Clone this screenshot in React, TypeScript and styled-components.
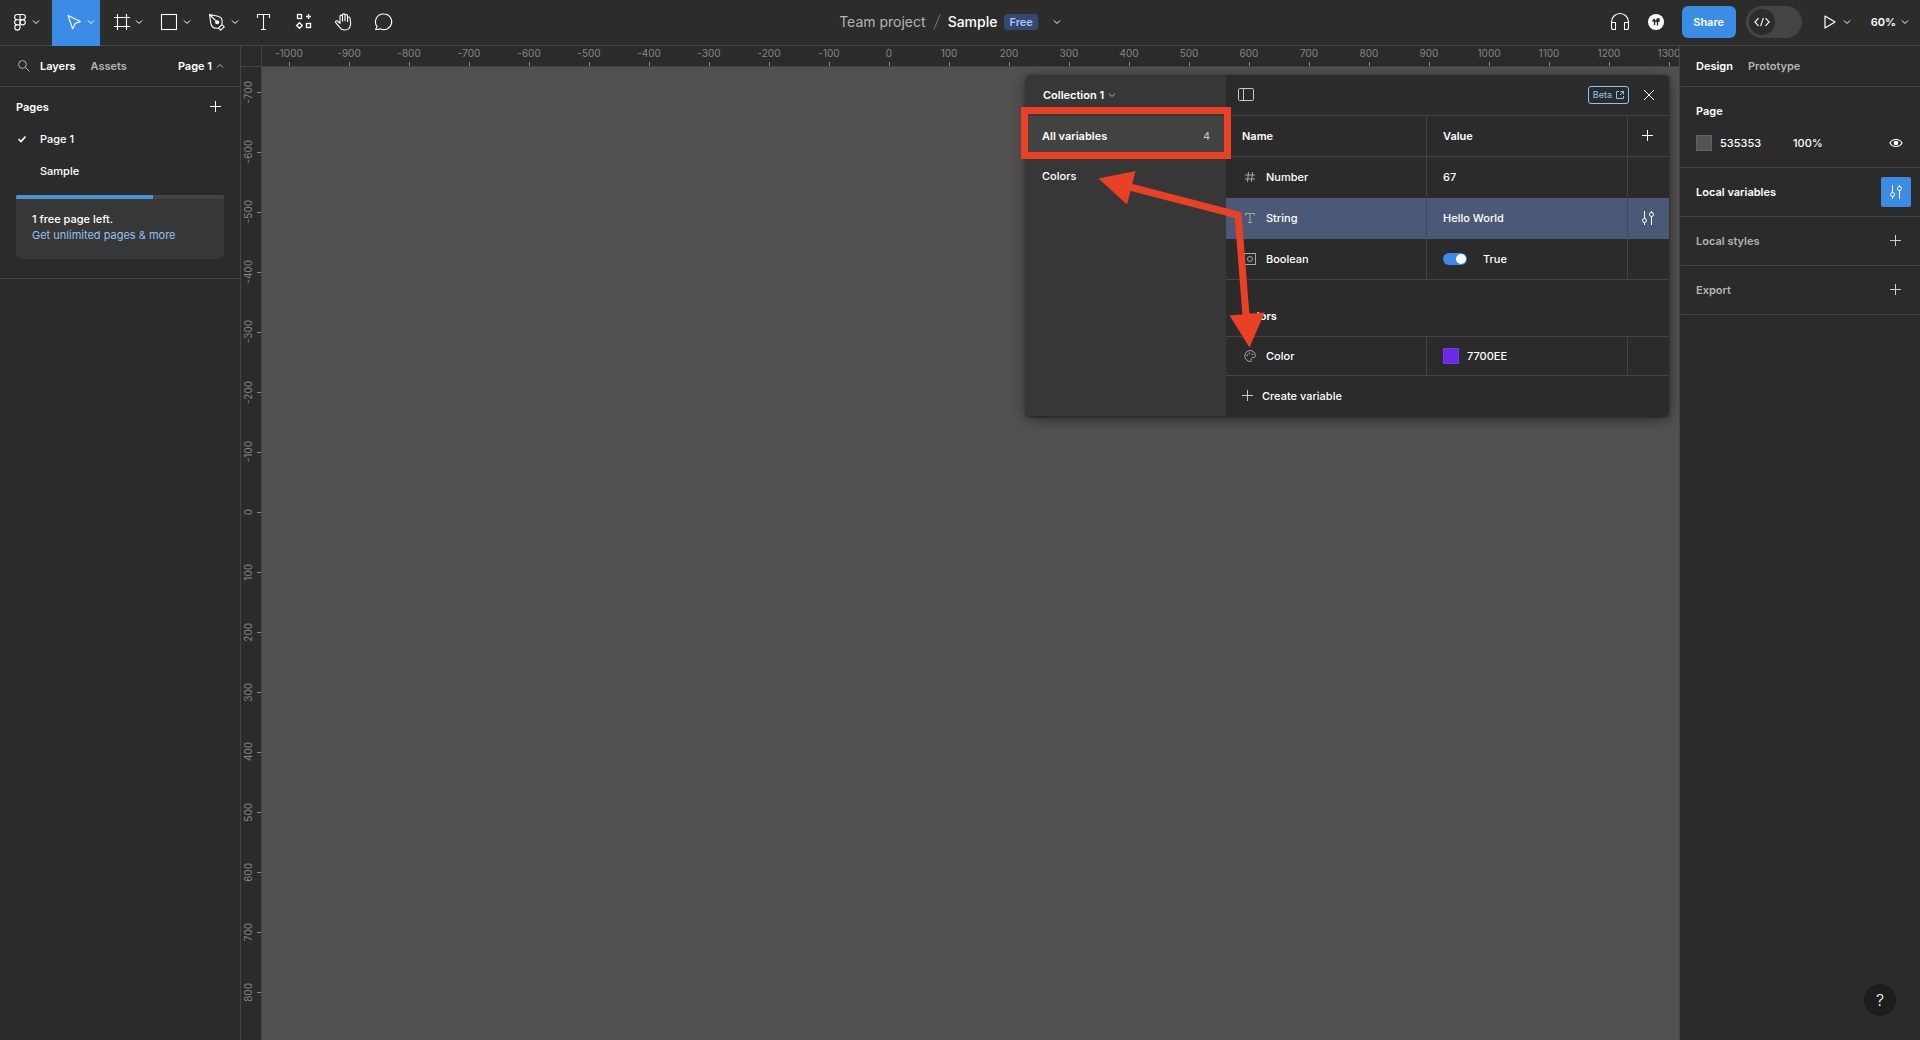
import React, { useEffect, useState } from "react";
import styled, { createGlobalStyle, css } from "styled-components";

const c = {
  bar: "#2c2c2b",
  panel: "#2c2b2c",
  side: "#383738",
  line: "#444444",
  canvas: "#525051",
  blue: "#3a8ce4",
  link: "#8fc3f0",
  text: "#ffffff",
  muted: "#b3b3b3",
  ruler: "#858585",
  selected: "#4b5977",
  red: "#ea4025",
};

const GlobalStyle = createGlobalStyle`
  *, *::before, *::after { box-sizing: border-box; }
  body { margin: 0; background: ${c.canvas}; }
  body, button, input, table {
    font-family: Inter, "Liberation Sans", sans-serif;
    font-size: 11px;
    line-height: 16px;
    color: ${c.text};
  }
  button { margin: 0; padding: 0; border: 0; background: none; }
  svg { display: block; flex: none; }
`;

/* ---------- icons ---------- */

type IconProps = { size?: number; width?: number; children: React.ReactNode };

const Icon = ({ size = 16, width = 1, children }: IconProps) => (
  <svg
    width={size}
    height={size}
    viewBox={`0 0 ${size} ${size}`}
    fill="none"
    stroke="currentColor"
    strokeWidth={width}
    aria-hidden="true"
  >
    {children}
  </svg>
);

const Chevron = ({ up = false }: { up?: boolean }) => (
  <Icon size={8}>
    <path d={up ? "M1 5.5 4 2.5 7 5.5" : "M1 2.5 4 5.5 7 2.5"} />
  </Icon>
);

const Slash = () => (
  <svg width="8" height="16" viewBox="0 0 8 16" stroke="#777777" aria-hidden="true">
    <path d="M1 15.5 7 .5" />
  </svg>
);

const FigmaIcon = () => (
  <Icon size={24} width={1.1}>
    <path d="M12 4.5H9.200a2.600 2.600 0 0 0 0 5.200H12zM12 4.500h2.800a2.600 2.600 0 0 1 0 5.200H12M12 9.700H9.200a2.600 2.600 0 0 0 0 5.200H12zM9.200 14.900a2.600 2.600 0 1 0 2.800 2.600v-2.600z" />
    <circle cx="14.700" cy="12.300" r="2.600" />
  </Icon>
);
const MoveIcon = () => (
  <Icon size={24} width={1.1}>
    <path d="M6 5.500 10.600 18.700 13.200 13.600 18.400 11.400z" strokeLinejoin="round" />
  </Icon>
);
const FrameIcon = () => (
  <Icon size={24} width={1.1}>
    <path d="M7.500 4v16M16.500 4v16M4 7.500h16M4 16.500h16" />
  </Icon>
);
const RectIcon = () => (
  <Icon size={24} width={1.1}>
    <rect x="3.500" y="4.500" width="15" height="15" />
  </Icon>
);
const PenIcon = () => (
  <Icon size={24} width={1.1}>
    <path
      d="M3.500 4.500 12 6.200c3 .700 4.600 3.300 4.100 6.600l-.300 2L12.500 18l-2 .200c-3 .200-5-1.600-5.600-4.500zM3.500 4.500l6.700 6.700M15.900 14.600l2.400 2.200-3.600 3.400-2.200-2.300"
      strokeLinejoin="round"
    />
    <circle cx="11.200" cy="12.200" r="1.500" fill="currentColor" />
  </Icon>
);
const TextIcon = () => (
  <Icon size={24} width={1.1}>
    <path d="M5.500 8V4.500h12V8M11.500 4.500v15M9 19.500h5" />
  </Icon>
);
const ResourcesIcon = () => (
  <Icon size={24} width={1.3}>
    <rect x="5.500" y="4.500" width="4" height="4" />
    <path d="M16.500 4v5M14 6.500h5M7.500 12.700 10.300 15.500 7.500 18.300 4.700 15.500z" />
    <rect x="14.500" y="13.500" width="4" height="4" />
  </Icon>
);
const HandIcon = () => (
  <Icon size={24} width={1.1}>
    <path
      d="M8 13.300V6.400a1.250 1.250 0 0 1 2.500 0V11M10.500 10.500V5.100a1.250 1.250 0 0 1 2.500 0v5.700M13 10.500V5.700a1.250 1.250 0 0 1 2.500 0V11.500M15.500 10.500V8.300a1.250 1.250 0 0 1 2.500 0c0 1.500.800 3.500.600 5.700-.300 3.600-2.200 6-5.800 6-3 0-4.300-1.300-5.700-3.300l-3.400-4c-.800-1.200.700-2.500 1.900-1.700l2.400 2.300"
      strokeLinecap="round"
      strokeLinejoin="round"
    />
  </Icon>
);
const CommentIcon = () => (
  <Icon size={24} width={1.1}>
    <path
      d="M12 4a7.800 7.800 0 1 1-3.700 14.700c-1.200.700-2.900 1-4.800.700.800-.900 1.500-1.700 1.500-3A7.800 7.800 0 0 1 12 4z"
      strokeLinejoin="round"
    />
  </Icon>
);
const HeadphonesIcon = () => (
  <Icon size={24} width={1.1}>
    <path
      d="M3.500 15v-3a8.500 8.500 0 0 1 17 0v3M3.500 12.500h4v7h-2a2 2 0 0 1-2-2zM20.500 12.500h-4v7h2a2 2 0 0 0 2-2z"
      strokeLinejoin="round"
    />
  </Icon>
);
const BadgeIcon = () => (
  <Icon size={10} width={1.4}>
    <path d="M3.500 2v6M1.500 4.500 3.500 2M6.500 2v6.500M4.500 5 6.500 2H8v3" />
  </Icon>
);
const CodeIcon = () => (
  <Icon size={16} width={1.1}>
    <path d="M4.500 4.200.900 8l3.600 3.800M11.500 4.200 15.100 8l-3.600 3.800M9.400 3.800 6.600 12.200" />
  </Icon>
);
const PlayIcon = () => (
  <Icon size={16} width={1.2}>
    <path d="M3 2 13 8 3 14z" strokeLinejoin="round" />
  </Icon>
);
const SearchIcon = () => (
  <Icon size={16}>
    <circle cx="6.500" cy="6.500" r="3.900" />
    <path d="M9.400 9.400 13.500 13.500" />
  </Icon>
);
const PlusIcon = () => (
  <Icon size={16}>
    <path d="M7.500 2v11M2 7.500h11" />
  </Icon>
);
const CheckIcon = () => (
  <Icon size={12} width={1.6}>
    <path d="M2.500 6 5 8.500 9.500 3.500" />
  </Icon>
);
const SlidersIcon = () => (
  <Icon size={16}>
    <path d="M4.500 1v7.500M4.500 12.500V15M11.500 15V6.500M11.500 2.500V1" />
    <circle cx="4.500" cy="10.500" r="2" />
    <circle cx="11.500" cy="4.500" r="2" />
  </Icon>
);
const EyeIcon = () => (
  <Icon size={16} width={1.2}>
    <path d="M2 8c1.200-2.300 3.300-3.500 6-3.500s4.800 1.200 6 3.500c-1.200 2.300-3.300 3.500-6 3.500S3.200 10.300 2 8z" />
    <circle cx="8" cy="8" r="1.700" fill="currentColor" />
  </Icon>
);
const SidebarIcon = () => (
  <Icon size={16}>
    <rect x="0.500" y="1.500" width="15" height="12" rx="1" />
    <path d="M5.500 1.500v12" />
  </Icon>
);
const CloseIcon = () => (
  <Icon size={12}>
    <path d="M1 1 11 11M11 1 1 11" />
  </Icon>
);
const ExternalIcon = () => (
  <Icon size={8}>
    <path d="M3 .500H.500v7h7V5M4.500.500h3v3M7.500.500 4 4" />
  </Icon>
);
const NumberIcon = () => (
  <Icon size={12}>
    <path d="M4.500 1 3.500 11M8.500 1 7.500 11M1 4h10M1 8h10" />
  </Icon>
);
const StringIcon = () => (
  <Icon size={12}>
    <path d="M1.500 3.500v-2h9v2M6 1.500v9.500M4 10.500h4" />
  </Icon>
);
const BooleanIcon = () => (
  <Icon size={12}>
    <rect x="0.500" y="0.500" width="11" height="11" />
    <circle cx="6" cy="6" r="2.500" />
  </Icon>
);
const PaletteIcon = () => (
  <Icon size={12}>
    <path d="M6 .500a5.500 5.500 0 1 0 .700 11c1-.200.600-1.500.500-2.200-.100-1.200.600-1.700 1.800-1.700 1.500 0 2.500-.400 2.500-2A5.500 5.500 0 0 0 6 .500z" />
    <circle cx="3.400" cy="5.300" r=".5" />
    <circle cx="5.700" cy="3.300" r=".5" />
    <circle cx="8.500" cy="4.300" r=".5" />
  </Icon>
);

/* ---------- frame ---------- */

const Screen = styled.div`
  display: grid;
  grid-template-rows: auto 1fr;
  height: 100vh;
  overflow: hidden;
`;

const Toolbar = styled.header`
  display: grid;
  grid-template-columns: 1fr auto 1fr;
  height: 46px;
  background: ${c.bar};
  box-shadow: inset 0 -1px ${c.line};
`;

const Tools = styled.div`
  display: flex;
`;

const Tool = styled.button<{ $active?: boolean; $wide?: boolean; $single?: boolean }>`
  display: flex;
  align-items: center;
  gap: ${(p) => (p.$wide ? 0 : 1)}px;
  width: ${(p) => (p.$wide ? 52 : p.$single ? 40 : 48)}px;
  padding: 0 0 2px ${(p) => (p.$wide || p.$single ? 8 : 10)}px;
  background: ${(p) => (p.$active ? c.blue : "transparent")};
`;

const Title = styled.div`
  display: flex;
  align-items: center;
  gap: 7px;
  padding: 0 12px 2px 0;
  font-size: 14px;
  color: ${c.muted};

  strong {
    font-weight: 500;
    color: ${c.text};
  }
  button {
    padding: 8px;
  }
`;

const Plan = styled.span`
  padding: 0 5px;
  border-radius: 3px;
  background: #36486f;
  color: #a3c8fa;
  font-size: 11px;
  font-weight: 600;
`;

const Actions = styled.div`
  display: flex;
  align-items: center;
  justify-content: flex-end;
  padding: 0 11px 2px 0;
`;

const Avatar = styled.span`
  display: grid;
  place-items: center;
  width: 16px;
  height: 16px;
  margin: 0 18px 0 16px;
  border-radius: 50%;
  background: #fff;
  color: #2c2c2c;
`;

const Share = styled.button`
  width: 54px;
  height: 32px;
  margin-right: 10px;
  border-radius: 6px;
  background: ${c.blue};
  font-weight: 600;
`;

const DevMode = styled.button`
  width: 56px;
  height: 32px;
  padding: 3px;
  border-radius: 16px;
  background: #444444;

  span {
    display: grid;
    place-items: center;
    width: 26px;
    height: 26px;
    border-radius: 50%;
    background: ${c.bar};
  }
`;

const MenuButton = styled.button`
  display: flex;
  align-items: center;
  gap: 5px;
  margin-left: 20px;
  font-weight: 600;
`;

const Work = styled.div`
  display: grid;
  grid-template-columns: 241px minmax(0, 1fr) 241px;
  min-height: 0;
`;

/* ---------- side panels ---------- */

const Panel = styled.aside<{ $side: "left" | "right" }>`
  background: ${c.panel};
  ${(p) => (p.$side === "left" ? "border-right" : "border-left")}: 1px solid ${c.line};
`;

const Tabs = styled.div`
  display: flex;
  align-items: center;
  gap: 15px;
  height: 41px;
  padding: 0 16px;
  border-bottom: 1px solid ${c.line};
`;

const Tab = styled.button<{ $on?: boolean }>`
  font-weight: 600;
  color: ${(p) => (p.$on ? c.text : c.muted)};
`;

const SearchButton = styled.button`
  margin-right: -7px;
  color: ${c.muted};
`;

const PagePicker = styled(Tab)`
  display: flex;
  align-items: center;
  gap: 4px;
  margin-left: auto;

  svg {
    color: ${c.muted};
  }
`;

const Section = styled.section`
  padding-bottom: 19px;
  border-bottom: 1px solid ${c.line};
`;

const SectionHead = styled.div`
  display: flex;
  align-items: center;
  justify-content: space-between;
  height: 36px;
  padding: 4px 16px 0;

  h2 {
    margin: 0;
    font-size: 11px;
    font-weight: 600;
  }
`;

const PageRow = styled.button`
  display: grid;
  grid-template-columns: 24px 1fr;
  align-items: center;
  width: 100%;
  height: 32px;
  padding: 0 16px;
  text-align: left;
  font-weight: 500;

  span {
    grid-column: 2;
  }
`;

const Upsell = styled.div`
  margin: 8px 16px 0;
  border-radius: 2px 2px 5px 5px;
  background: ${c.side};
  overflow: hidden;
  font-weight: 500;

  p {
    margin: 0;
    padding: 12px 16px 16px;
  }
  a {
    display: block;
    color: ${c.link};
    font-weight: 400;
    text-decoration: none;
  }
`;

const Meter = styled.div`
  height: 4px;
  background: ${c.line};

  div {
    width: 66%;
    height: 100%;
    background: #4a92d6;
  }
`;

const PageProps = styled.section`
  padding: 8px 16px;
  border-bottom: 1px solid ${c.line};

  h2 {
    margin: 0;
    font-size: 11px;
    font-weight: 600;
    line-height: 32px;
  }
`;

const Fill = styled.div`
  display: grid;
  grid-template-columns: 24px 73px 1fr auto;
  align-items: center;
  height: 32px;
  font-weight: 500;
`;

const Swatch = styled.span<{ $color: string }>`
  width: 16px;
  height: 16px;
  background: ${(p) => p.$color};
  box-shadow: inset 0 0 0 1px rgba(255, 255, 255, 0.08);
`;

const PropRow = styled.section<{ $on?: boolean }>`
  display: flex;
  align-items: center;
  justify-content: space-between;
  height: 49px;
  padding: 0 9px 0 16px;
  border-bottom: 1px solid ${c.line};
  color: ${(p) => (p.$on ? c.text : c.muted)};

  h2 {
    margin: 0;
    font-size: 11px;
    font-weight: 600;
  }
  button {
    display: grid;
    place-items: center;
    width: 30px;
    height: 30px;
    border-radius: 2px;
    background: ${(p) => (p.$on ? c.blue : "transparent")};
    color: ${(p) => (p.$on ? c.text : "#d0d0d0")};
  }
`;

const Help = styled.button`
  position: fixed;
  right: 24px;
  bottom: 24px;
  width: 32px;
  height: 32px;
  border-radius: 50%;
  background: #1e1d1e;
  font-size: 16px;
  font-weight: 300;
`;

/* ---------- canvas and rulers ---------- */

const Stage = styled.main`
  position: relative;
  display: grid;
  grid-template: 21px minmax(0, 1fr) / 21px minmax(0, 1fr);
`;

const rulerBase = css`
  display: flex;
  overflow: hidden;
  background: ${c.panel};
  color: ${c.ruler};
  font-size: 10px;
  line-height: 12px;
`;

const Corner = styled.div`
  background: ${c.panel};
  border-right: 1px solid ${c.line};
  border-bottom: 1px solid ${c.line};
`;

const TopRuler = styled.div`
  ${rulerBase}
  padding-top: 1px;
  border-bottom: 1px solid ${c.line};

  div:first-child {
    margin-left: -3px;
  }
`;

const TopMark = styled.div`
  display: flex;
  flex: none;
  flex-direction: column;
  align-items: center;
  justify-content: space-between;
  width: 60px;

  i {
    width: 1px;
    height: 4px;
    background: ${c.ruler};
  }
`;

const SideRuler = styled.div`
  ${rulerBase}
  flex-direction: column;
  border-right: 1px solid ${c.line};

  div:first-child {
    margin-top: -5px;
  }
`;

const SideMark = styled.div`
  display: flex;
  flex: none;
  align-items: center;
  justify-content: space-between;
  height: 60px;
  padding-left: 1px;

  span {
    writing-mode: vertical-rl;
    transform: rotate(180deg);
  }
  i {
    width: 4px;
    height: 1px;
    background: ${c.ruler};
  }
`;

const Canvas = styled.div`
  background: ${c.canvas};
`;

/* ---------- variables window ---------- */

const Window = styled.section`
  position: absolute;
  top: 29px;
  right: 10px;
  display: grid;
  grid-template-columns: 200px 443px;
  border-radius: 4px;
  box-shadow: 0 3px 14px rgba(0, 0, 0, 0.45), 0 1px 3px rgba(0, 0, 0, 0.4);
`;

const Groups = styled.nav`
  border-radius: 4px 0 0 4px;
  background: ${c.side};
`;

const CollectionButton = styled.button`
  display: flex;
  align-items: center;
  gap: 4px;
  height: 41px;
  padding: 0 17px 2px;
  font-weight: 600;

  svg {
    color: ${c.muted};
  }
`;

const Group = styled.button<{ $on?: boolean }>`
  display: flex;
  align-items: center;
  justify-content: space-between;
  width: 100%;
  height: 40px;
  padding: 0 16px;
  background: ${(p) => (p.$on ? "#424242" : "transparent")};
  font-weight: ${(p) => (p.$on ? 600 : 500)};

  span {
    color: #c8c8c8;
    font-weight: 400;
  }
`;

const Variables = styled.div`
  border-radius: 0 4px 4px 0;
  background: ${c.panel};
`;

const WindowBar = styled.div`
  display: flex;
  align-items: center;
  gap: 14px;
  height: 41px;
  padding: 0 14px 0 12px;
  border-bottom: 1px solid ${c.line};

  button:first-child {
    margin-right: auto;
    color: #c8c8c8;
  }
`;

const Beta = styled.a`
  display: flex;
  align-items: center;
  gap: 4px;
  padding: 0 4px;
  border: 1px solid ${c.link};
  border-radius: 3px;
  color: ${c.link};
  font-size: 9px;
  text-decoration: none;
`;

const Table = styled.table`
  width: 100%;
  table-layout: fixed;
  border-collapse: separate;
  border-spacing: 0;

  button {
    display: block;
  }
`;

const NameCol = styled.col`
  width: 200px;
`;

const ValueCol = styled.col`
  width: 201px;
`;

const Row = styled.tr<{ $selected?: boolean; $line?: boolean; $short?: boolean }>`
  background: ${(p) => (p.$selected ? c.selected : "transparent")};

  > * {
    height: ${(p) => (p.$short ? 39 : 41)}px;
    padding: 0 16px;
    border-bottom: 1px solid ${(p) => (p.$line ? c.line : "transparent")};
    text-align: left;
    font-weight: 500;
  }
  > * + * {
    border-left: 1px solid ${(p) => (p.$selected ? "#3a4766" : c.line)};
  }
  > th {
    font-weight: 600;
  }
  > :last-child {
    padding: 0 12px;
  }
`;

const GroupRow = styled.tr`
  th {
    height: 57px;
    padding: 16px 16px 0;
    border-bottom: 1px solid ${c.line};
    text-align: left;
    font-weight: 600;
  }
`;

const VarName = styled.span`
  display: flex;
  align-items: center;
  gap: 10px;
  padding-left: 2px;

  svg {
    color: #a8a8a8;
  }
`;

const ColorValue = styled.span`
  display: flex;
  align-items: center;
  gap: 8px;
`;

const Switch = styled.label`
  display: flex;
  align-items: center;
  gap: 16px;

  input {
    appearance: none;
    display: flex;
    width: 24px;
    height: 12px;
    margin: 0;
    border-radius: 6px;
    background: ${c.blue};
  }
  input::before {
    content: "";
    width: 10px;
    height: 10px;
    margin: 1px 1px 1px auto;
    border-radius: 50%;
    background: #fff;
  }
`;

const CreateButton = styled.button`
  display: flex;
  align-items: center;
  gap: 6px;
  height: 40px;
  padding: 0 14px;
  font-weight: 500;

  svg {
    color: #c8c8c8;
  }
`;

const Highlight = styled.div`
  position: absolute;
  top: 32px;
  left: -5px;
  width: 210px;
  height: 52px;
  border: 7px solid ${c.red};
  pointer-events: none;
`;

const Arrows = styled.svg`
  position: absolute;
  top: 0;
  left: 0;
  pointer-events: none;
`;

/* Ruler marks sit 60px apart; only those whose tick fits in the strip are drawn. */
const STEP = 60;
const marks = (from: number, firstTick: number, length: number) =>
  Array.from(
    { length: Math.max(0, Math.ceil((length - firstTick) / STEP)) },
    (_, i) => from + i * 100
  );

function useViewport() {
  const read = () => ({ width: window.innerWidth, height: window.innerHeight });
  const [size, setSize] = useState(read);
  useEffect(() => {
    const update = () => setSize(read());
    window.addEventListener("resize", update);
    return () => window.removeEventListener("resize", update);
  }, []);
  return size;
}

function VariablesWindow() {
  return (
    <Window aria-label="Local variables">
      <Groups>
        <CollectionButton>
          Collection 1 <Chevron />
        </CollectionButton>
        <Group $on>
          All variables <span>4</span>
        </Group>
        <Group>Colors</Group>
      </Groups>
      <Variables>
        <WindowBar>
          <button aria-label="Toggle sidebar">
            <SidebarIcon />
          </button>
          <Beta href="#beta">
            Beta <ExternalIcon />
          </Beta>
          <button aria-label="Close">
            <CloseIcon />
          </button>
        </WindowBar>
        <Table>
          <colgroup>
            <NameCol />
            <ValueCol />
            <col />
          </colgroup>
          <thead>
            <Row $line>
              <th>Name</th>
              <th>Value</th>
              <th>
                <button aria-label="Add mode">
                  <PlusIcon />
                </button>
              </th>
            </Row>
          </thead>
          <tbody>
            <Row>
              <td><VarName><NumberIcon />Number</VarName></td>
              <td>67</td>
              <td />
            </Row>
            <Row $selected>
              <td><VarName><StringIcon />String</VarName></td>
              <td>Hello World</td>
              <td>
                <button aria-label="Edit variable">
                  <SlidersIcon />
                </button>
              </td>
            </Row>
            <Row $line>
              <td><VarName><BooleanIcon />Boolean</VarName></td>
              <td>
                <Switch>
                  <input type="checkbox" defaultChecked />
                  True
                </Switch>
              </td>
              <td />
            </Row>
            <GroupRow>
              <th colSpan={3}>Colors</th>
            </GroupRow>
            <Row $line $short>
              <td><VarName><PaletteIcon />Color</VarName></td>
              <td>
                <ColorValue><Swatch $color="#6a2be8" />7700EE</ColorValue>
              </td>
              <td />
            </Row>
          </tbody>
        </Table>
        <CreateButton>
          <PlusIcon /> Create variable
        </CreateButton>
      </Variables>
      <Highlight />
      <Arrows width="260" height="280" viewBox="0 0 260 280" aria-hidden="true">
        <path d="M104 112 212 140 220 240" fill="none" stroke={c.red} strokeWidth="7" />
        <path d="M72.500 103.500 109.500 96 101 129.500zM223.500 272.500 203.500 240.500 238.500 237.500z" fill={c.red} />
      </Arrows>
    </Window>
  );
}

export default function App() {
  const { width, height } = useViewport();
  return (
    <Screen>
      <GlobalStyle />
      <Toolbar>
        <Tools>
          <Tool $wide aria-label="Main menu"><FigmaIcon /><Chevron /></Tool>
          <Tool $active aria-label="Move"><MoveIcon /><Chevron /></Tool>
          <Tool aria-label="Frame"><FrameIcon /><Chevron /></Tool>
          <Tool aria-label="Rectangle"><RectIcon /><Chevron /></Tool>
          <Tool aria-label="Pen"><PenIcon /><Chevron /></Tool>
          <Tool $single aria-label="Text"><TextIcon /></Tool>
          <Tool $single aria-label="Resources"><ResourcesIcon /></Tool>
          <Tool $single aria-label="Hand"><HandIcon /></Tool>
          <Tool $single aria-label="Comment"><CommentIcon /></Tool>
        </Tools>
        <Title>
          <span>Team project</span>
          <Slash />
          <strong>Sample</strong>
          <Plan>Free</Plan>
          <button aria-label="File menu"><Chevron /></button>
        </Title>
        <Actions>
          <HeadphonesIcon />
          <Avatar><BadgeIcon /></Avatar>
          <Share>Share</Share>
          <DevMode aria-label="Dev mode"><span><CodeIcon /></span></DevMode>
          <MenuButton aria-label="Present"><PlayIcon /><Chevron /></MenuButton>
          <MenuButton>60% <Chevron /></MenuButton>
        </Actions>
      </Toolbar>
      <Work>
        <Panel $side="left">
          <Tabs>
            <SearchButton aria-label="Search"><SearchIcon /></SearchButton>
            <Tab $on>Layers</Tab>
            <Tab>Assets</Tab>
            <PagePicker $on>Page 1 <Chevron up /></PagePicker>
          </Tabs>
          <Section>
            <SectionHead>
              <h2>Pages</h2>
              <button aria-label="Add page"><PlusIcon /></button>
            </SectionHead>
            <PageRow><CheckIcon /><span>Page 1</span></PageRow>
            <PageRow><span>Sample</span></PageRow>
            <Upsell>
              <Meter><div /></Meter>
              <p>
                1 free page left.
                <a href="#upgrade">Get unlimited pages &amp; more</a>
              </p>
            </Upsell>
          </Section>
        </Panel>
        <Stage>
          <Corner />
          <TopRuler>
            {marks(-1000, 27, width - 503).map((n) => (
              <TopMark key={n}><span>{n}</span><i /></TopMark>
            ))}
          </TopRuler>
          <SideRuler>
            {marks(-700, 25, height - 67).map((n) => (
              <SideMark key={n}><span>{n}</span><i /></SideMark>
            ))}
          </SideRuler>
          <Canvas />
          <VariablesWindow />
        </Stage>
        <Panel $side="right">
          <Tabs>
            <Tab $on>Design</Tab>
            <Tab>Prototype</Tab>
          </Tabs>
          <PageProps>
            <h2>Page</h2>
            <Fill>
              <Swatch $color="#535353" />
              <span>535353</span>
              <span>100%</span>
              <button aria-label="Toggle visibility"><EyeIcon /></button>
            </Fill>
          </PageProps>
          <PropRow $on>
            <h2>Local variables</h2>
            <button aria-label="Open variables"><SlidersIcon /></button>
          </PropRow>
          <PropRow>
            <h2>Local styles</h2>
            <button aria-label="Add style"><PlusIcon /></button>
          </PropRow>
          <PropRow>
            <h2>Export</h2>
            <button aria-label="Add export"><PlusIcon /></button>
          </PropRow>
        </Panel>
      </Work>
      <Help aria-label="Help">?</Help>
    </Screen>
  );
}
